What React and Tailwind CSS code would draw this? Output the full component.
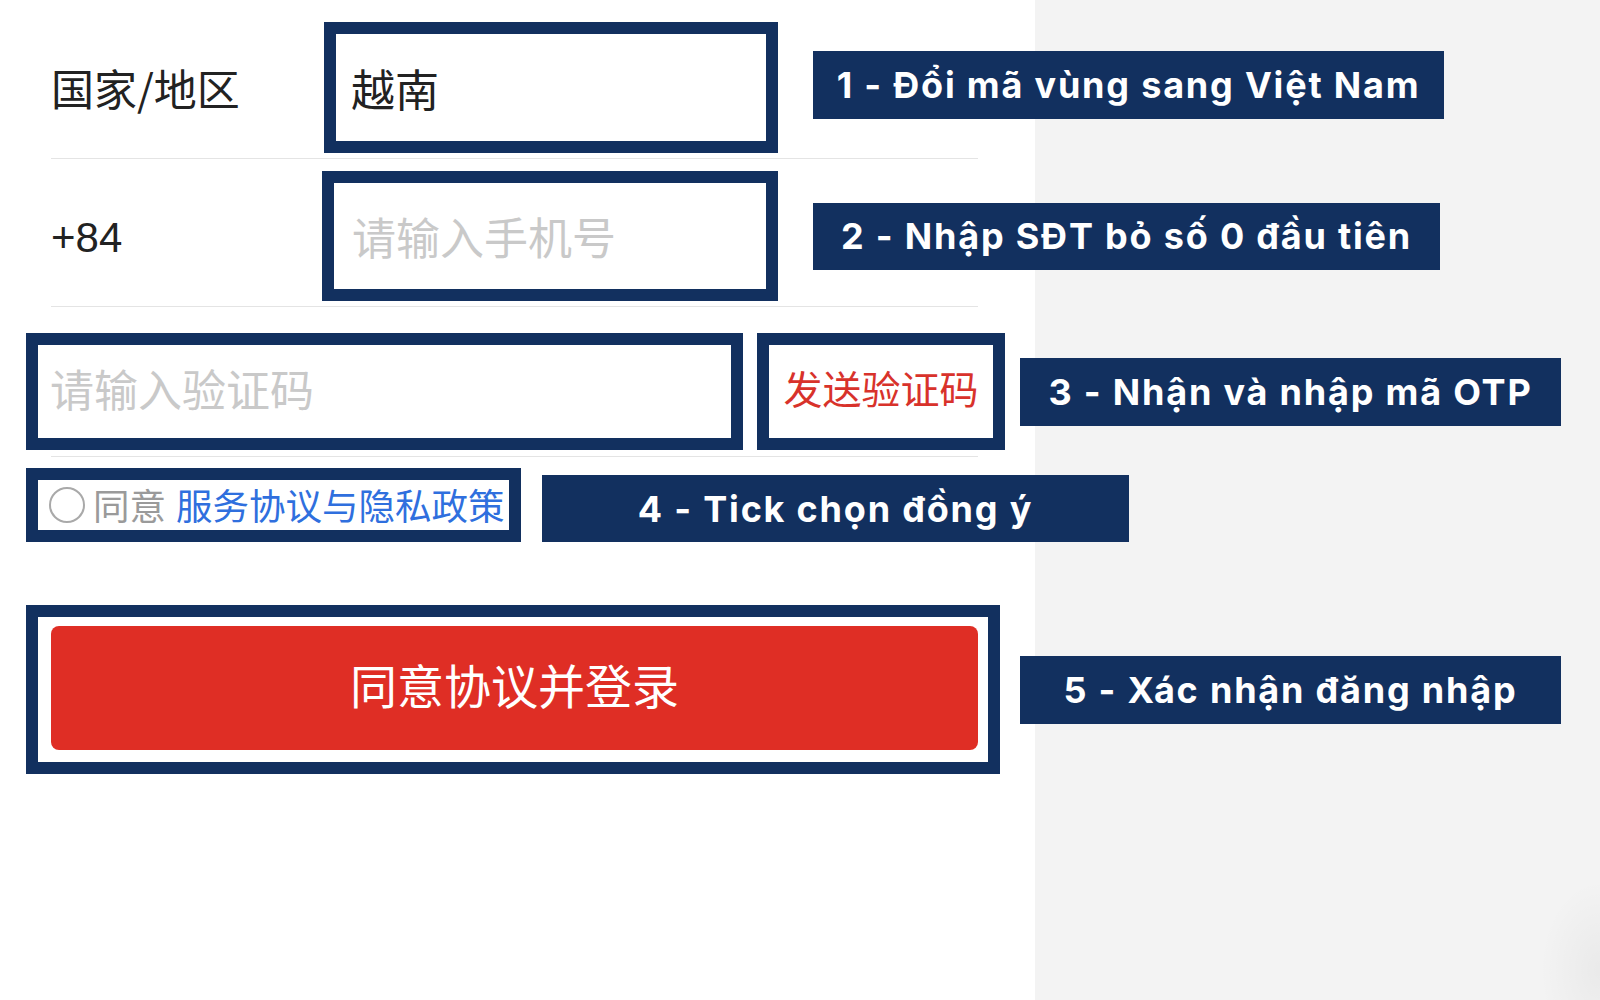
import React from "react";

const cjk = "font-['Noto_Sans_CJK_SC','Noto_Sans',sans-serif]";
const lab = "font-['Inter','Noto_Sans',sans-serif]";

function Tag({ className, children }) {
  return (
    <div
      className={`flex shrink-0 items-center justify-center bg-[#12305f] text-white font-bold text-[36px] tracking-[1.8px] ${lab} ${className}`}
    >
      {children}
    </div>
  );
}

export default function App() {
  return (
    <div className="relative h-[1000px] w-[1600px] overflow-hidden bg-[linear-gradient(to_right,#ffffff_1035px,#f3f3f3_1035px)] pt-[22px]">
      {/* Row 1 */}
      <div className="flex h-[131px] items-center">
        <div className={`ml-[51px] w-[273px] text-[43px] text-[#222] ${cjk}`}>国家/地区</div>
        <div className="flex h-[131px] w-[454px] shrink-0 items-center border-[12px] border-[#12305f] bg-white pl-[15px]">
          <span className={`text-[44px] text-[#222] ${cjk}`}>越南</span>
        </div>
        <Tag className="ml-[35px] mt-[-5px] h-[68px] w-[631px]">1 - Đổi mã vùng sang Việt Nam</Tag>
      </div>
      <div className="ml-[51px] mt-[5px] h-px w-[927px] bg-[#e4e4e4]" />

      {/* Row 2 */}
      <div className="mt-[12px] flex h-[130px] items-center">
        <div className={`ml-[51px] w-[271px] pt-[3px] text-[42px] text-[#222] font-['Liberation_Sans',sans-serif]`}>+84</div>
        <div className="flex h-[130px] w-[456px] shrink-0 items-center border-[12px] border-[#12305f] bg-white pl-[18px]">
          <span className={`text-[44px] text-[#c9c9c9] ${cjk}`}>请输入手机号</span>
        </div>
        <Tag className="ml-[35px] h-[67px] w-[627px]">2 - Nhập SĐT bỏ số 0 đầu tiên</Tag>
      </div>
      <div className="ml-[51px] mt-[5px] h-px w-[927px] bg-[#e4e4e4]" />

      {/* Row 3 */}
      <div className="mt-[26px] flex h-[117px] items-center">
        <div className="ml-[26px] flex h-[117px] w-[717px] shrink-0 items-center border-[12px] border-[#12305f] bg-white pb-[8px] pl-[12px]">
          <span className={`text-[44px] text-[#c9c9c9] ${cjk}`}>请输入验证码</span>
        </div>
        <div className="ml-[14px] flex h-[117px] w-[248px] shrink-0 items-center justify-center border-[12px] border-[#12305f] bg-white pb-[8px]">
          <span className={`text-[39px] text-[#d8322b] ${cjk}`}>发送验证码</span>
        </div>
        <Tag className="ml-[15px] h-[68px] w-[541px]">3 - Nhận và nhập mã OTP</Tag>
      </div>
      <div className="ml-[51px] mt-[6px] h-px w-[927px] bg-[#e4e4e4]" />

      {/* Row 4 */}
      <div className="mt-[11px] flex items-start">
        <div className="ml-[26px] flex h-[74px] w-[495px] shrink-0 items-center border-[12px] border-[#12305f] bg-white pl-[11px]">
          <span className="h-[36px] w-[36px] shrink-0 rounded-full border-2 border-[#a9a9a9]" />
          <span className={`ml-[8px] text-[36.5px] leading-none text-[#9a9a9a] ${cjk}`}>同意</span>
          <span className={`ml-[10px] text-[36.5px] leading-none text-[#2f6fde] ${cjk}`}>服务协议与隐私政策</span>
        </div>
        <Tag className="ml-[21px] mt-[7px] h-[67px] w-[587px]">4 - Tick chọn đồng ý</Tag>
      </div>

      {/* Row 5 */}
      <div className="mt-[63px] flex items-center">
        <div className="ml-[26px] h-[169px] w-[974px] shrink-0 border-[12px] border-[#12305f] bg-white pb-[12px] pl-[13px] pr-[10px] pt-[9px]">
          <div className="flex h-full w-full items-center justify-center rounded-[8px] bg-[#df2e25] pb-[8px]">
            <span className={`text-[47px] text-white ${cjk}`}>同意协议并登录</span>
          </div>
        </div>
        <Tag className="ml-[20px] h-[68px] w-[541px]">5 - Xác nhận đăng nhập</Tag>
      </div>

      <div className="pointer-events-none absolute bottom-[-60px] right-[-60px] h-[180px] w-[120px] rounded-full bg-[radial-gradient(closest-side,rgba(0,0,0,0.04),rgba(0,0,0,0))]" />
    </div>
  );
}
